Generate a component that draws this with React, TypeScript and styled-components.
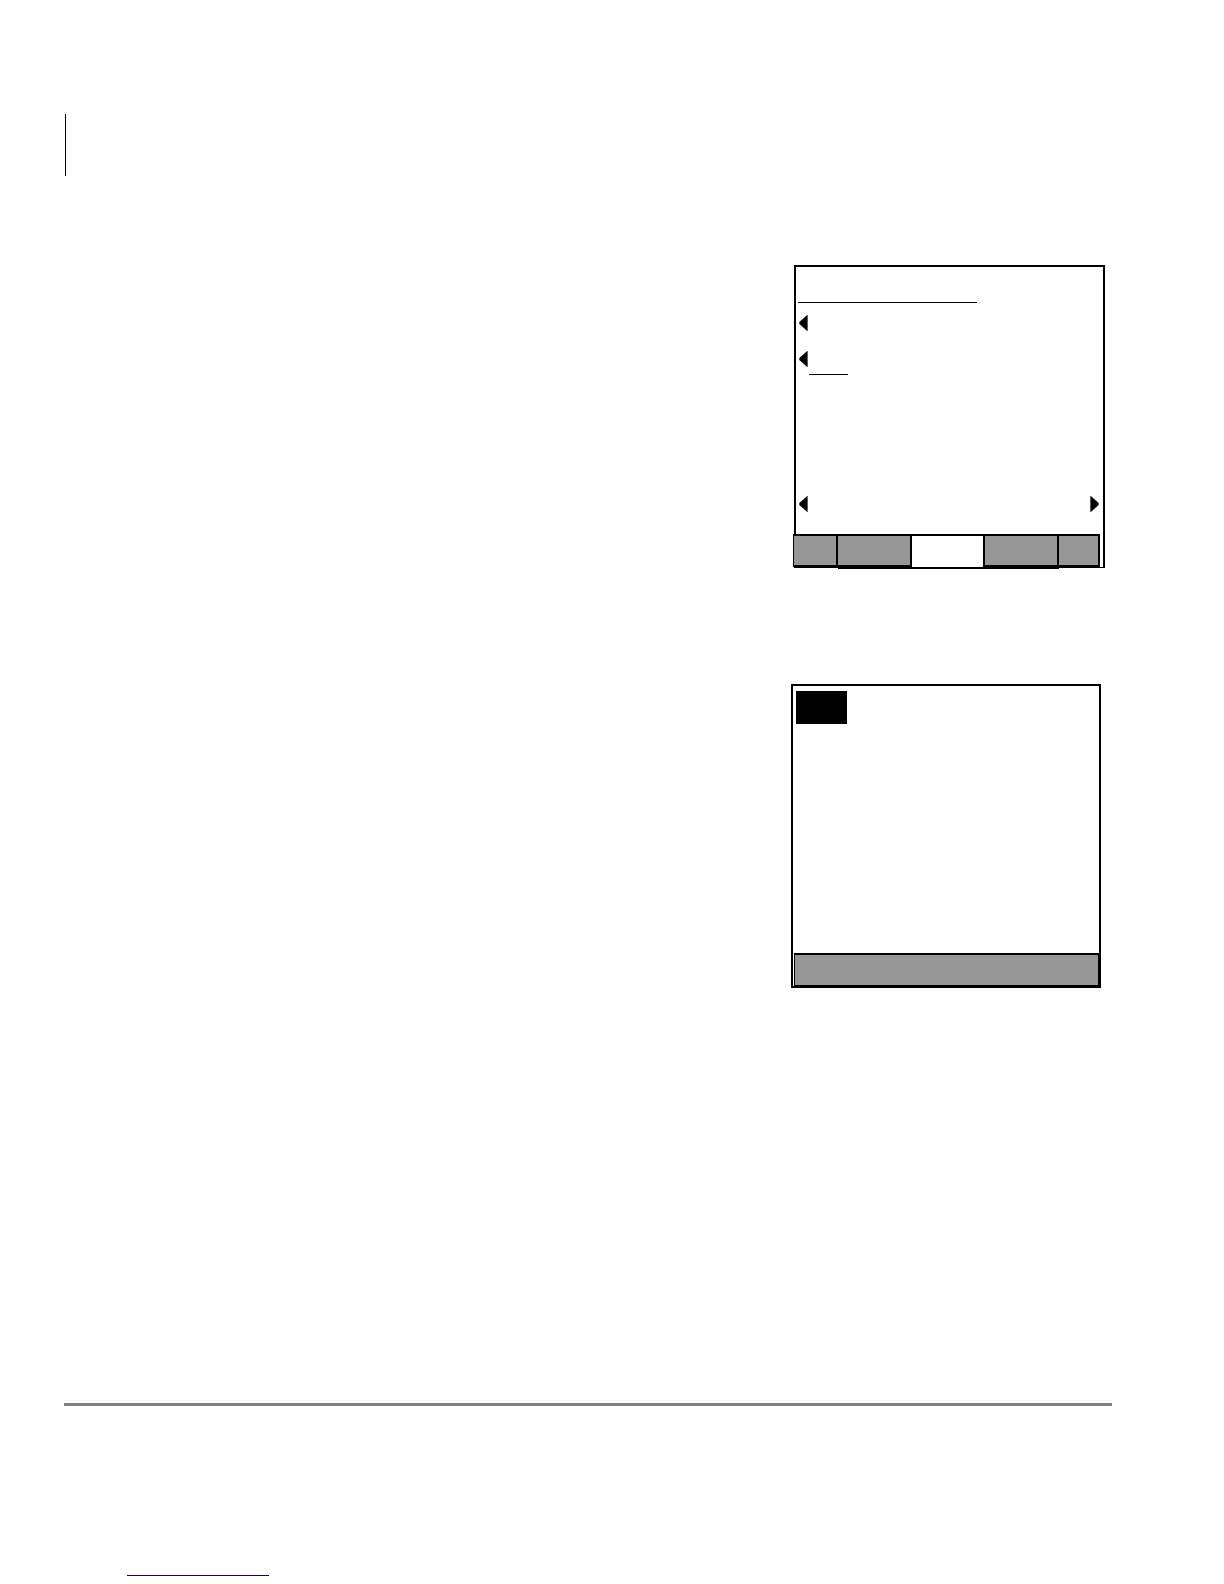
import React from "react";
import styled, { createGlobalStyle } from "styled-components";

const GlobalStyle = createGlobalStyle`
  *, *::before, *::after { box-sizing: border-box; }
  body {
    margin: 0;
    background: #fff;
    color: #000;
    font-family: "Liberation Sans", Arial, sans-serif;
  }
`;

const Page = styled.div`
  display: flex;
  flex-direction: column;
  padding: 114px 112px 8px 64px;
`;

const ChangeBar = styled.header`
  height: 62px;
  margin-left: 1px;
  border-left: 1px solid #000;
`;

const Screens = styled.main`
  display: flex;
  flex-direction: column;
  align-items: flex-end;
  gap: 116px;
  padding-top: 89px;
`;

const Screen = styled.section`
  display: flex;
  flex-direction: column;
  border: 2px solid #000;
`;

const MenuScreen = styled(Screen)`
  width: 311px;
  height: 303px;
  margin-right: 7px;
  border-bottom-width: 1px;
`;

const StatusScreen = styled(Screen)`
  width: 310px;
  height: 304px;
  margin-right: 11px;
`;

const Title = styled.div`
  width: 179px;
  height: 36px;
  margin-left: 2px;
  border-bottom: 1px solid #000;
`;

const Rows = styled.div`
  display: flex;
  flex: 1;
  flex-direction: column;
  padding: 12px 4px 22px 3px;
`;

const Row = styled.div<{ $last?: boolean }>`
  display: flex;
  justify-content: space-between;
  height: ${({ $last }) => ($last ? "16px" : "36px")};
  margin-top: ${({ $last }) => ($last ? "auto" : "0")};
`;

const Value = styled.div`
  width: 39px;
  height: 24px;
  margin: 0 auto 0 1px;
  border-bottom: 1px solid #000;
`;

const ArrowButton = styled.button`
  display: block;
  width: 9px;
  height: 16px;
  padding: 0;
  border: 0;
  background: none;

  svg { display: block; }
`;

const Keys = styled.div`
  display: grid;
  grid-template-columns: 45fr 74fr 73fr 74fr 41fr;
  align-items: start;
  margin: 0 3px -2px -3px;
`;

const Key = styled.button<{ $kind: "edge" | "tab" | "active"; $first?: boolean }>`
  height: ${({ $kind }) => ($kind === "edge" ? "33px" : "35px")};
  padding: 0;
  border: solid #000;
  border-width: ${({ $kind, $first }) =>
    `2px 2px ${$kind === "tab" ? "4px" : "2px"} ${$first ? "1px" : "0"}`};
  border-radius: 0;
  background: ${({ $kind }) => ($kind === "active" ? "#fff" : "#969696")};
`;

const Badge = styled.div`
  width: 51px;
  height: 33px;
  margin: 5px 0 0 3px;
  background: #000;
`;

const StatusBar = styled.div`
  height: 34px;
  margin: auto -1px -1px 1px;
  border: solid #000;
  border-width: 2px 2px 2px 1px;
  background: #969696;
`;

const Footer = styled.footer`
  margin-top: 412px;
  border-top: 1px solid #f8f8f8;
`;

const Rule = styled.hr`
  height: 3px;
  margin: 2px 0 0;
  border: 0;
  background: #808080;
`;

const FooterLink = styled.a`
  display: block;
  width: 142px;
  height: 20px;
  margin: 150px 0 0 63px;
  border-bottom: 1px solid #00008b;
`;

function Arrow({ direction }: { direction: "left" | "right" }) {
  return (
    <ArrowButton type="button" aria-label={direction === "left" ? "Select" : "Next"}>
      <svg width="9" height="16" viewBox="0 0 9 16" aria-hidden="true">
        <path
          d={
            direction === "left"
              ? "M8.6 0V16H8.2L0.3 9V7L8.2 0Z"
              : "M0.4 0V16H0.8L8.7 9V7L0.8 0Z"
          }
        />
      </svg>
    </ArrowButton>
  );
}

export default function App() {
  return (
    <>
      <GlobalStyle />
      <Page>
        <ChangeBar />
        <Screens>
          <MenuScreen>
            <Title />
            <Rows>
              <Row><Arrow direction="left" /></Row>
              <Row>
                <Arrow direction="left" />
                <Value />
              </Row>
              <Row $last>
                <Arrow direction="left" />
                <Arrow direction="right" />
              </Row>
            </Rows>
            <Keys>
              <Key type="button" $kind="edge" $first aria-label="Previous" />
              <Key type="button" $kind="tab" aria-label="Left tab" />
              <Key type="button" $kind="active" aria-label="Current tab" />
              <Key type="button" $kind="tab" aria-label="Right tab" />
              <Key type="button" $kind="edge" aria-label="More" />
            </Keys>
          </MenuScreen>
          <StatusScreen>
            <Badge />
            <StatusBar />
          </StatusScreen>
        </Screens>
        <Footer>
          <Rule />
          <FooterLink href="#top" aria-label="Website" />
        </Footer>
      </Page>
    </>
  );
}
